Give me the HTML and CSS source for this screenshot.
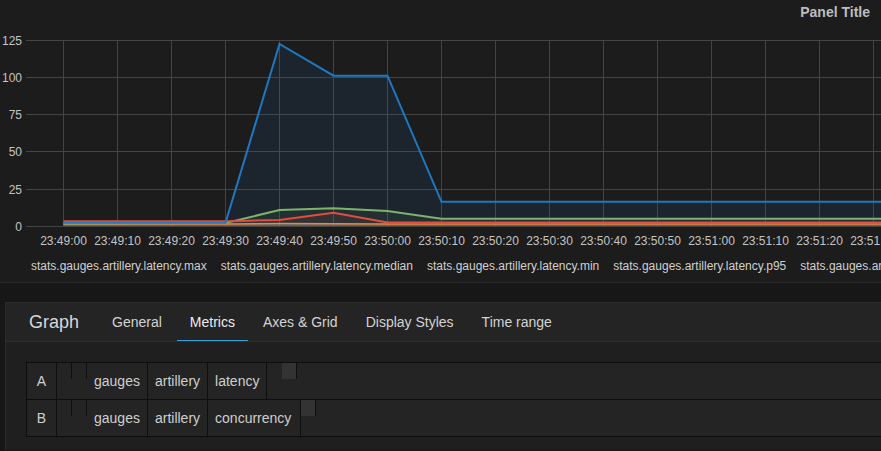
FILE: index.html
```html
<!DOCTYPE html>
<html>
<head>
<meta charset="utf-8">
<link rel="stylesheet" href="styles.css">
</head>
<body>
<div class="panel">
  <div class="panel-title">Panel Title</div>
  <svg class="chart" width="881" height="228" viewBox="0 26 881 228" xmlns="http://www.w3.org/2000/svg">
    <g class="grid">
      <line x1="26" y1="40.5" x2="881" y2="40.5"/>
      <line x1="26" y1="77.5" x2="881" y2="77.5"/>
      <line x1="26" y1="114.5" x2="881" y2="114.5"/>
      <line x1="26" y1="151.5" x2="881" y2="151.5"/>
      <line x1="26" y1="189.5" x2="881" y2="189.5"/>
      <line x1="26" y1="226.5" x2="881" y2="226.5"/>
      <line x1="63.5" y1="40" x2="63.5" y2="226"/>
      <line x1="117.5" y1="40" x2="117.5" y2="226"/>
      <line x1="171.5" y1="40" x2="171.5" y2="226"/>
      <line x1="225.5" y1="40" x2="225.5" y2="226"/>
      <line x1="279.5" y1="40" x2="279.5" y2="226"/>
      <line x1="333.5" y1="40" x2="333.5" y2="226"/>
      <line x1="387.5" y1="40" x2="387.5" y2="226"/>
      <line x1="441.5" y1="40" x2="441.5" y2="226"/>
      <line x1="495.5" y1="40" x2="495.5" y2="226"/>
      <line x1="549.5" y1="40" x2="549.5" y2="226"/>
      <line x1="603.5" y1="40" x2="603.5" y2="226"/>
      <line x1="657.5" y1="40" x2="657.5" y2="226"/>
      <line x1="711.5" y1="40" x2="711.5" y2="226"/>
      <line x1="765.5" y1="40" x2="765.5" y2="226"/>
      <line x1="819.5" y1="40" x2="819.5" y2="226"/>
      <line x1="873.5" y1="40" x2="873.5" y2="226"/>
    </g>
    <g class="ylabels">
      <text x="22" y="44.5">125</text>
      <text x="22" y="81.5">100</text>
      <text x="22" y="118.5">75</text>
      <text x="22" y="155.5">50</text>
      <text x="22" y="193.5">25</text>
      <text x="22" y="230.5">0</text>
    </g>
    <g class="xlabels">
      <text x="63.5" y="245">23:49:00</text>
      <text x="117.5" y="245">23:49:10</text>
      <text x="171.5" y="245">23:49:20</text>
      <text x="225.5" y="245">23:49:30</text>
      <text x="279.5" y="245">23:49:40</text>
      <text x="333.5" y="245">23:49:50</text>
      <text x="387.5" y="245">23:50:00</text>
      <text x="441.5" y="245">23:50:10</text>
      <text x="495.5" y="245">23:50:20</text>
      <text x="549.5" y="245">23:50:30</text>
      <text x="603.5" y="245">23:50:40</text>
      <text x="657.5" y="245">23:50:50</text>
      <text x="711.5" y="245">23:51:00</text>
      <text x="765.5" y="245">23:51:10</text>
      <text x="819.5" y="245">23:51:20</text>
      <text x="873.5" y="245">23:51:30</text>
    </g>
    <g class="fills">
      <polygon class="f-blue" points="63.5,222.7 225.5,222.7 279.5,44 333.5,75.7 387.5,75.7 441.5,201.8 881,201.8 881,226 63.5,226"/>
      <polygon class="f-green" points="63.5,223.5 225.5,223 279.5,210 333.5,208.3 387.5,211 441.5,218.7 881,218.7 881,226 63.5,226"/>
      <polygon class="f-red" points="63.5,221.5 225.5,221.5 279.5,220 333.5,212.7 387.5,222.5 441.5,222.5 881,222.5 881,226 63.5,226"/>
    </g>
    <g class="series">
      <polyline class="s-teal" points="63.5,225 881,225"/>
      <polyline class="s-orange" points="63.5,224 225.5,224 279.5,223.6 333.5,223.8 387.5,224 881,224"/>
      <polyline class="s-green" points="63.5,223.5 225.5,223 279.5,210 333.5,208.3 387.5,211 441.5,218.7 881,218.7"/>
      <polyline class="s-red" points="63.5,221.3 225.5,221.3 279.5,220 333.5,212.7 387.5,222.5 441.5,222.5 881,222.5"/>
      <polyline class="s-blue" points="63.5,222.8 225.5,222.8 279.5,44 333.5,75.7 387.5,75.7 441.5,201.8 881,201.8"/>
    </g>
  </svg>
  <div class="legend">
    <span class="legend-item">stats.gauges.artillery.latency.max</span>
    <span class="legend-item">stats.gauges.artillery.latency.median</span>
    <span class="legend-item">stats.gauges.artillery.latency.min</span>
    <span class="legend-item">stats.gauges.artillery.latency.p95</span>
    <span class="legend-item">stats.gauges.artillery.latency.p99</span>
  </div>
</div>

<div class="editor">
  <div class="editor-header">
    <span class="editor-title">Graph</span>
    <nav class="tabs">
      <span class="tab">General</span>
      <span class="tab active">Metrics</span>
      <span class="tab">Axes &amp; Grid</span>
      <span class="tab">Display Styles</span>
      <span class="tab">Time range</span>
    </nav>
  </div>
  <div class="editor-body">
    <div class="targets">
      <div class="target-row">
        <div class="cell letter">A</div>
        <div class="blanks"><span class="blank"></span><span class="blank"></span></div>
        <div class="cell seg">gauges</div>
        <div class="cell seg">artillery</div>
        <div class="cell seg">latency</div>
        <span class="spacer"></span>
        <span class="add-box"></span>
      </div>
      <div class="target-row">
        <div class="cell letter">B</div>
        <div class="blanks"><span class="blank"></span><span class="blank"></span></div>
        <div class="cell seg">gauges</div>
        <div class="cell seg">artillery</div>
        <div class="cell seg wide">concurrency</div>
        <span class="add-box"></span>
      </div>
    </div>
  </div>
</div>
</body>
</html>
```

FILE: styles.css
```css
* { box-sizing: border-box; }

html, body {
  margin: 0;
  padding: 0;
}

body {
  background: #171717;
  font-family: "Liberation Sans", Arial, Helvetica, sans-serif;
  width: 881px;
  height: 451px;
  overflow: hidden;
}

.panel {
  background: #1c1c1c;
  height: 283px;
  border-bottom: 1px solid #262626;
  padding-bottom: 3px;
  overflow: hidden;
}

.panel-title {
  height: 26px;
  line-height: 24px;
  text-align: right;
  padding-right: 11px;
  font-size: 14px;
  font-weight: bold;
  color: #bdbdbd;
}

.chart {
  display: block;
}

.grid line {
  stroke: #444444;
  stroke-width: 1;
}

.ylabels text {
  fill: #c4c4c4;
  font-size: 12px;
  text-anchor: end;
  font-family: "Liberation Sans", Arial, sans-serif;
}

.xlabels text {
  fill: #c4c4c4;
  font-size: 12px;
  text-anchor: middle;
  font-family: "Liberation Sans", Arial, sans-serif;
}

.f-blue { fill: rgba(31, 120, 193, 0.1); }
.f-green { fill: rgba(126, 178, 109, 0.08); }
.f-red { fill: rgba(226, 77, 66, 0.08); }

.series polyline {
  fill: none;
  stroke-width: 2;
  stroke-linejoin: miter;
}

.s-blue { stroke: #1f78c1; }
.s-green { stroke: #7eb26d; }
.s-red { stroke: #e24d42; }
.s-orange { stroke: #ef843c; stroke-width: 1.5 !important; }
.s-teal { stroke: #6a9aa8; stroke-width: 1.2 !important; }

.legend {
  display: flex;
  gap: 14px;
  height: 25px;
  line-height: 25px;
  padding-left: 31px;
  font-size: 12px;
  color: #d0d0d0;
  white-space: nowrap;
  overflow: hidden;
}

.legend-item {
  flex: none;
}

.editor {
  margin: 19px 0 0 5px;
  border-top: 1px solid #2b2b2b;
  border-left: 1px solid #2b2b2b;
  background: #1f1f1f;
  height: 148px;
}

.editor-header {
  display: flex;
  align-items: stretch;
  height: 39px;
  background: #242424;
  border-bottom: 1px solid #2d2d2d;
}

.editor-title {
  display: flex;
  align-items: center;
  padding-left: 23px;
  margin-right: 20px;
  font-size: 18px;
  color: #d8d8d8;
}

.tabs {
  display: flex;
  gap: 2px;
}

.tab {
  display: flex;
  align-items: center;
  padding: 0 13px;
  font-size: 14px;
  color: #d3d3d3;
}

.tab.active {
  color: #ececec;
  box-shadow: inset 0 -1px 0 #33a1d6;
}

.editor-body {
  padding: 20px 0 0 20px;
}

.targets {
  border-top: 1px solid #0e0e0e;
  border-left: 1px solid #0e0e0e;
}

.target-row {
  display: flex;
  align-items: stretch;
  height: 37px;
  background: #242424;
  border-bottom: 1px solid #0e0e0e;
  font-size: 14px;
  color: #cfcfcf;
}

.cell {
  display: flex;
  align-items: center;
  border-right: 1px solid #0e0e0e;
}

.letter {
  width: 30px;
  justify-content: center;
}

.blanks {
  display: flex;
  align-items: flex-start;
}

.blank {
  width: 15px;
  height: 16px;
  border-right: 1px solid #0e0e0e;
}

.seg {
  padding: 0 7px;
}

.seg.wide {
  padding-right: 9px;
}

.spacer {
  width: 15px;
}

.add-box {
  width: 15px;
  height: 16px;
  background: #333333;
  border-right: 1px solid #0e0e0e;
}
```
